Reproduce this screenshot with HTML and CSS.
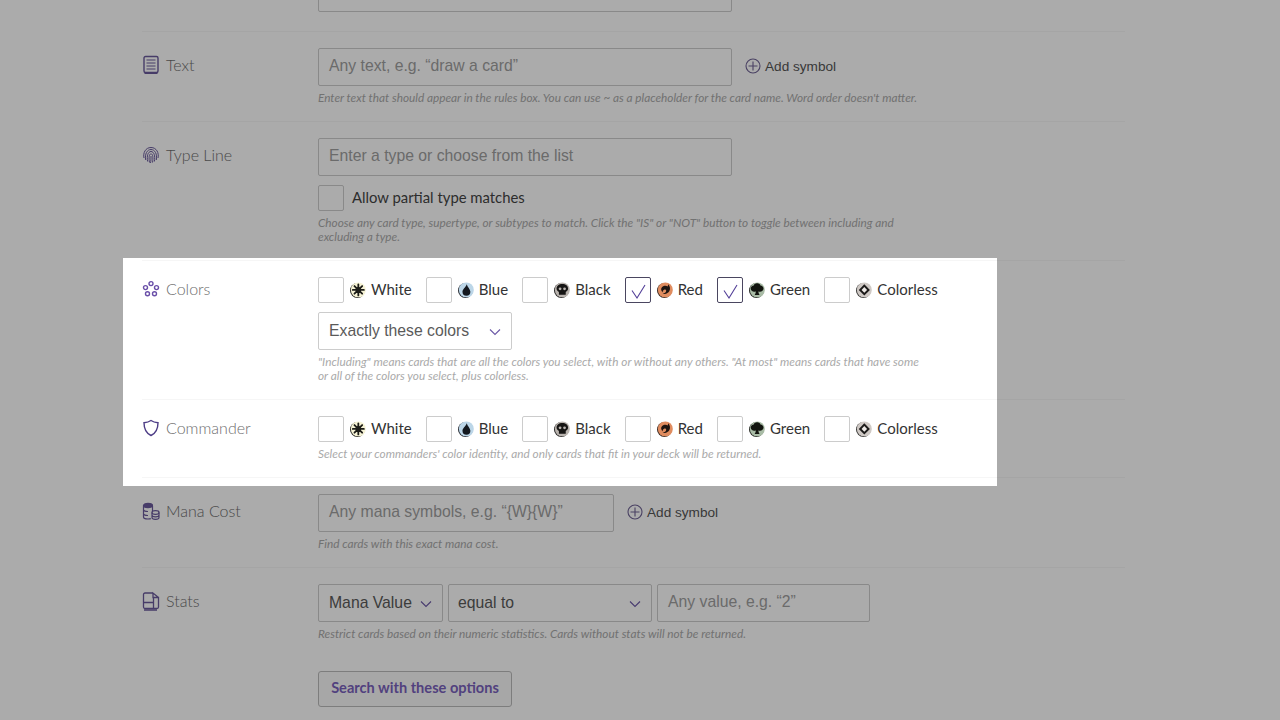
FILE: index.html
```html
<!DOCTYPE html>
<html lang="en">
<head>
<meta charset="utf-8">
<title>Advanced Search</title>
<link rel="stylesheet" href="styles.css">
</head>
<body>
<svg class="defs" width="0" height="0" aria-hidden="true">
  <defs>
    <symbol id="m-w" viewBox="0.6 0.6 15 15">
      <circle cx="7.600" cy="8.600" r="7" fill="#2b2b25"/><circle cx="8.400" cy="8" r="7" fill="#f6f3d6"/>
      <g stroke="#1c1c18" stroke-width="1.700" stroke-linecap="round"><path d="M8.400 2.800v10.400M3.200 8h10.400M4.800 4.400l7.200 7.200M12 4.400l-7.200 7.200"/></g>
      <circle cx="8.400" cy="8" r="2.600" fill="#1c1c18"/>
    </symbol>
    <symbol id="m-u" viewBox="0.6 0.6 15 15">
      <circle cx="7.600" cy="8.600" r="7" fill="#2b2f36"/><circle cx="8.400" cy="8" r="7" fill="#bcd6e8"/>
      <path d="M8.800 2.600c.5 2.600 3.400 4.600 3.400 7.200a3.700 3.700 0 0 1-7.400 0c0-2.400 2.900-4.200 4-7.200z" fill="#14181f"/>
    </symbol>
    <symbol id="m-b" viewBox="0.6 0.6 15 15">
      <circle cx="7.600" cy="8.600" r="7" fill="#2b2a29"/><circle cx="8.400" cy="8" r="7" fill="#b9b3ae"/>
      <path d="M8.400 2.400c3.200 0 5.400 1.900 5.400 4.400 0 1.600-1 2.600-2.200 3.200v2.600H5.200V10C4 9.400 3 8.400 3 6.800c0-2.500 2.200-4.400 5.400-4.400z" fill="#161514"/>
      <circle cx="6.300" cy="7" r="1.300" fill="#b9b3ae"/><circle cx="10.500" cy="7" r="1.300" fill="#b9b3ae"/>
    </symbol>
    <symbol id="m-r" viewBox="0.6 0.6 15 15">
      <circle cx="7.600" cy="8.600" r="7" fill="#3a2a22"/><circle cx="8.400" cy="8" r="7" fill="#e08c5f"/>
      <path d="M11 2.800c1.800 1.800 2.400 4.200 1.200 6.300-1.200 2.200-3.600 3.300-6.200 2.400 1.800-.2 3-1.200 3.200-2.500.2-1.200-1-1.800-2-1.200-1 .5-1.400 1.600-1.200 2.600C4.200 8.800 4 6.800 5.400 5.400 7 3.800 9.500 4 10.500 4.800c.4-.6.600-1.200.5-2z" fill="#1e1410"/>
    </symbol>
    <symbol id="m-g" viewBox="0.6 0.6 15 15">
      <circle cx="7.600" cy="8.600" r="7" fill="#2a2d28"/><circle cx="8.400" cy="8" r="7" fill="#a9bca6"/>
      <path d="M8.400 1.800c1.600 0 2.700 1 2.900 2 1.700.2 2.900 1.500 2.900 3 0 1.800-1.500 2.900-3.300 2.900-.9 0-1.300-.2-1.600-.5.1 1.400.5 2.500 1.200 3.700H5.900c.7-1.200 1.100-2.300 1.200-3.700-.3.300-.8.500-1.600.5-1.800 0-3.300-1.100-3.300-2.900 0-1.500 1.200-2.800 2.900-3 .2-1 1.300-2 2.900-2z" fill="#12140f"/>
    </symbol>
    <symbol id="m-c" viewBox="0.6 0.6 15 15">
      <circle cx="7.600" cy="8.600" r="7" fill="#3a3a38"/><circle cx="8.400" cy="8" r="7" fill="#cfc9c5"/>
      <path d="M8.400 2.800l5.200 5.200-5.200 5.200L3.200 8z" fill="#1b1a19"/><path d="M8.400 5.400L11 8l-2.600 2.600L5.800 8z" fill="#eeeae7"/>
    </symbol>
    <symbol id="i-chevron" viewBox="0 0 12 8">
      <path d="M1 1.500l5 5 5-5" fill="none" stroke="#6b58a6" stroke-width="1.100"/>
    </symbol>
    <symbol id="i-plus" viewBox="0 0 16 16">
      <circle cx="8" cy="8" r="7" fill="none" stroke="#6f6294" stroke-width="1.100"/>
      <path d="M8 3.500v9M3.500 8h9" stroke="#6f6294" stroke-width="1.100"/>
    </symbol>
    <symbol id="i-check" viewBox="0 0 24 24">
      <path d="M6 12.500l5 7.500L19 7" fill="none" stroke="#533f98" stroke-width="1.100"/>
    </symbol>
  </defs>
</svg>

<main class="page">
  <section class="row row-first">
    <div class="label"></div>
    <div class="field">
      <div class="line"><div class="input input-wide">Any words in the name, e.g. “Fire”</div></div>
    </div>
  </section>

  <section class="row">
    <div class="label">
      <svg class="label-icon" viewBox="0 0 18 20"><rect x="2" y="1.500" width="14" height="16" rx="1.500" fill="none" stroke="#6a5a9c" stroke-width="1.400"/><path d="M2.500 17.500h13v1.500h-13z" fill="#6a5a9c"/><path d="M4.500 5h9M4.500 8h9M4.500 11h9M4.500 14h9" stroke="#6a5a9c" stroke-width="1"/></svg>
      <span>Text</span>
    </div>
    <div class="field">
      <div class="line">
        <div class="input input-wide">Any text, e.g. “draw a card”</div>
        <div class="add-symbol"><svg class="plus"><use href="#i-plus"/></svg>Add symbol</div>
      </div>
      <p class="help">Enter text that should appear in the rules box. You can use ~ as a placeholder for the card name. Word order doesn't matter.</p>
    </div>
  </section>

  <section class="row">
    <div class="label">
      <svg class="label-icon" viewBox="0 0 18 18" fill="none" stroke="#6a5a9c" stroke-width="1"><path d="M2 12C.8 7 3.500 1.500 9 1.500S17.200 7 16 12"/><path d="M3.700 14C2.700 8 5 3.500 9 3.500S15.300 8 14.300 14"/><path d="M5.600 15.500C4.600 10 6 5.500 9 5.500s4.400 4.500 3.400 10"/><path d="M7.500 16.500C6.600 12 7.200 7.800 9 7.800s2.400 4.200 1.500 8.700"/><path d="M9 10c0 3 0 5-.500 7"/></svg>
      <span>Type Line</span>
    </div>
    <div class="field">
      <div class="line"><div class="input input-wide">Enter a type or choose from the list</div></div>
      <div class="partial"><span class="box"></span><span class="partial-text">Allow partial type matches</span></div>
      <p class="help">Choose any card type, supertype, or subtypes to match. Click the "IS" or "NOT" button to toggle between including and<br>excluding a type.</p>
    </div>
  </section>

  <section class="row">
    <div class="label label-compact">
      <svg class="label-icon" viewBox="0 0 18 18" fill="none" stroke="#6a4fa8" stroke-width="1.400"><circle cx="9" cy="3.600" r="2"/><circle cx="3.500" cy="7.600" r="2"/><circle cx="14.500" cy="7.600" r="2"/><circle cx="5.500" cy="13.800" r="2"/><circle cx="12.500" cy="13.800" r="2"/></svg>
      <span>Colors</span>
    </div>
    <div class="field">
      <div class="colors">
        <div class="color"><span class="box"></span><svg class="mana"><use href="#m-w"/></svg><span>White</span></div>
        <div class="color"><span class="box"></span><svg class="mana"><use href="#m-u"/></svg><span>Blue</span></div>
        <div class="color"><span class="box"></span><svg class="mana"><use href="#m-b"/></svg><span>Black</span></div>
        <div class="color"><span class="box box-checked"><svg class="check"><use href="#i-check"/></svg></span><svg class="mana"><use href="#m-r"/></svg><span>Red</span></div>
        <div class="color"><span class="box box-checked"><svg class="check"><use href="#i-check"/></svg></span><svg class="mana"><use href="#m-g"/></svg><span>Green</span></div>
        <div class="color"><span class="box"></span><svg class="mana"><use href="#m-c"/></svg><span>Colorless</span></div>
      </div>
      <div class="select select-colors"><span>Exactly these colors</span><svg class="chevron"><use href="#i-chevron"/></svg></div>
      <p class="help">"Including" means cards that are all the colors you select, with or without any others. "At most" means cards that have some<br>or all of the colors you select, plus colorless.</p>
    </div>
  </section>

  <section class="row">
    <div class="label label-compact">
      <svg class="label-icon" viewBox="0 0 18 18" fill="none" stroke="#4d3d86" stroke-width="1.400"><path d="M9 1.500c2 1.400 4.200 2 7 2.200 0 5.800-1.800 10.300-7 12.800-5.200-2.500-7-7-7-12.800 2.800-.2 5-.8 7-2.200z"/></svg>
      <span>Commander</span>
    </div>
    <div class="field">
      <div class="colors">
        <div class="color"><span class="box"></span><svg class="mana"><use href="#m-w"/></svg><span>White</span></div>
        <div class="color"><span class="box"></span><svg class="mana"><use href="#m-u"/></svg><span>Blue</span></div>
        <div class="color"><span class="box"></span><svg class="mana"><use href="#m-b"/></svg><span>Black</span></div>
        <div class="color"><span class="box"></span><svg class="mana"><use href="#m-r"/></svg><span>Red</span></div>
        <div class="color"><span class="box"></span><svg class="mana"><use href="#m-g"/></svg><span>Green</span></div>
        <div class="color"><span class="box"></span><svg class="mana"><use href="#m-c"/></svg><span>Colorless</span></div>
      </div>
      <p class="help">Select your commanders' color identity, and only cards that fit in your deck will be returned.</p>
    </div>
  </section>

  <section class="row">
    <div class="label">
      <svg class="label-icon" viewBox="0 0 18 18" fill="none" stroke="#6a5a9c" stroke-width="1.200"><ellipse cx="6" cy="3.500" rx="4.500" ry="2.200" fill="#6a5a9c"/><path d="M1.500 3.500V15c0 1.200 2 2 4.500 2 1 0 2-.1 2.800-.4M1.500 7.500c0 1.200 2 2 4.500 2M1.500 11.500c0 1.200 2 2 4.500 2M10.500 4v5"/><ellipse cx="13.500" cy="10.500" rx="3.500" ry="1.800"/><path d="M10 10.500v5c0 1 1.600 1.800 3.500 1.800s3.500-.8 3.500-1.800v-5M10 13c0 1 1.600 1.800 3.500 1.800S17 14 17 13"/></svg>
      <span>Mana Cost</span>
    </div>
    <div class="field">
      <div class="line">
        <div class="input input-mana">Any mana symbols, e.g. “{W}{W}”</div>
        <div class="add-symbol"><svg class="plus"><use href="#i-plus"/></svg>Add symbol</div>
      </div>
      <p class="help">Find cards with this exact mana cost.</p>
    </div>
  </section>

  <section class="row row-last">
    <div class="label">
      <svg class="label-icon" viewBox="0 0 18 20" fill="none" stroke="#6a5a9c" stroke-width="1.300"><path d="M11 2H3a1.500 1.500 0 0 0-1.500 1.500V16A1.500 1.500 0 0 0 3 17.500h12a1.500 1.500 0 0 0 1.500-1.500V6.500H11V2l5.500 4.500"/><path d="M1.500 11.500h10V17.500M11.500 11.500V7"/><path d="M2 19h13" stroke-width="1.500"/></svg>
      <span>Stats</span>
    </div>
    <div class="field">
      <div class="line line-stats">
        <div class="select select-stat"><span>Mana Value</span><svg class="chevron"><use href="#i-chevron"/></svg></div>
        <div class="select select-op"><span>equal to</span><svg class="chevron"><use href="#i-chevron"/></svg></div>
        <div class="input input-value">Any value, e.g. “2”</div>
      </div>
      <p class="help">Restrict cards based on their numeric statistics. Cards without stats will not be returned.</p>
      <div class="button">Search with these options</div>
    </div>
  </section>
</main>

<div class="spotlight"></div>
</body>
</html>
```
FILE: styles.css
```css
* { box-sizing: border-box; }

html, body {
  margin: 0;
  height: 720px;
  overflow: hidden;
  background: #fff;
}

body {
  position: relative;
  font-family: "Lato", "Liberation Sans", sans-serif;
  color: #333;
}

.defs { position: absolute; }

.page {
  width: 983px;
  margin: -42px 0 0 142px;
}

.row {
  display: grid;
  grid-template-columns: 176px 1fr;
  padding: 16px 0;
  border-bottom: 1px solid #f6f6f6;
}

.row-first { padding-bottom: 19px; }
.row-last { border-bottom: 0; }

.label {
  display: flex;
  align-items: center;
  gap: 6px;
  height: 32px;
  font-size: 16px;
  font-weight: 300;
  color: #6e6e6e;
}

.label-compact { height: 22px; }

.label-icon {
  width: 18px;
  height: 20px;
  flex: none;
  margin-top: 2px;
}

.line {
  display: flex;
  align-items: center;
}

.line-stats { gap: 5px; }

.input, .select {
  height: 38px;
  border: 1px solid #ccc;
  border-radius: 2px;
  background: #fff;
  font-family: "Liberation Sans", Arial, sans-serif;
  font-size: 15.75px;
  line-height: 34px;
}

.input {
  padding: 0 10px;
  color: #a0a0a0;
}

.input-wide { width: 414px; }
.input-mana { width: 296px; }
.input-value { width: 213px; }

.select {
  display: flex;
  align-items: center;
  justify-content: space-between;
  padding: 0 10px 1px;
  color: #5a5a5a;
}

.select-colors { width: 194px; margin-top: 9px; }
.select-stat { width: 125px; }
.select-op { width: 204px; padding-left: 9px; }

.chevron {
  width: 12px;
  height: 8px;
  flex: none;
  margin-top: 3px;
}

.add-symbol {
  display: flex;
  align-items: center;
  gap: 4px;
  margin: -2px 0 0 13px;
  font-family: "Liberation Sans", Arial, sans-serif;
  font-size: 13.6px;
  color: #555;
}

.plus {
  width: 16px;
  height: 16px;
}

.help {
  margin: 5px 0 0;
  font-size: 11.8px;
  line-height: 14px;
  font-style: italic;
  color: #aaa;
}

.box {
  display: block;
  width: 26px;
  height: 26px;
  flex: none;
  border: 1px solid #ccc;
  border-radius: 2px;
  background: #fff;
}

.box-checked { border-color: #4a4660; }

.check {
  display: block;
  width: 24px;
  height: 24px;
}

.partial {
  display: flex;
  align-items: flex-start;
  gap: 8px;
  margin-top: 9px;
  line-height: 24px;
}

.partial-text {
  font-size: 14.85px;
  color: #444;
}

.colors {
  display: flex;
  gap: 14.1px;
}

.color {
  display: flex;
  align-items: flex-start;
  font-size: 15px;
  line-height: 24px;
  color: #333;
}

.mana {
  width: 16px;
  height: 16px;
  margin: 5px 5px 0 6px;
  flex: none;
}

.button {
  width: 194px;
  height: 36px;
  margin-top: 30px;
  border: 1px solid #bbb;
  border-radius: 3px;
  background: #fafafa;
  text-align: center;
  font-size: 14.6px;
  font-weight: 700;
  line-height: 32px;
  color: #7a62bd;
}

.spotlight {
  position: absolute;
  left: 123px;
  top: 258px;
  width: 874px;
  height: 228px;
  box-shadow: 0 0 0 2000px rgba(0, 0, 0, 0.33);
}
```
